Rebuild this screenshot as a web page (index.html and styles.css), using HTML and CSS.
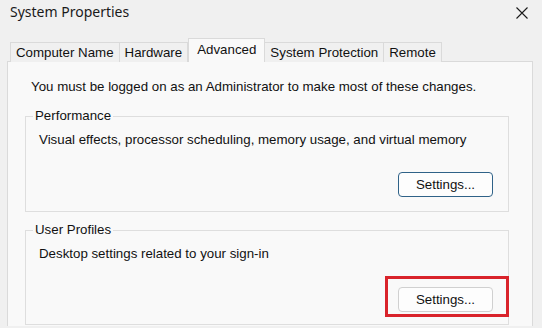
FILE: index.html
```html
<!DOCTYPE html>
<html lang="en">
<head>
<meta charset="utf-8">
<title>System Properties</title>
<link rel="stylesheet" href="styles.css">
</head>
<body>
<div class="window">
  <div class="titlebar">
    <span class="title">System Properties</span>
    <span class="close" aria-label="Close">
      <svg width="12" height="12" viewBox="0 0 12 12"><path d="M0.5 0.5 L11.5 11.5 M11.5 0.5 L0.5 11.5" stroke="#1a1a1a" stroke-width="1.1" fill="none"/></svg>
    </span>
  </div>
  <div class="tabs">
    <div class="tab">Computer Name</div>
    <div class="tab">Hardware</div>
    <div class="tab active">Advanced</div>
    <div class="tab">System Protection</div>
    <div class="tab">Remote</div>
  </div>
  <div class="panel">
    <p class="note">You must be logged on as an Administrator to make most of these changes.</p>
    <fieldset class="group">
      <legend>Performance</legend>
      <p class="desc">Visual effects, processor scheduling, memory usage, and virtual memory</p>
      <div class="actions">
        <button class="btn default">Settings...</button>
      </div>
    </fieldset>
    <fieldset class="group second">
      <legend>User Profiles</legend>
      <p class="desc">Desktop settings related to your sign-in</p>
      <div class="actions">
        <span class="highlight-wrap">
          <button class="btn">Settings...</button>
          <span class="highlight"></span>
        </span>
      </div>
    </fieldset>
  </div>
</div>
</body>
</html>
```

FILE: styles.css
```css
html, body {
  margin: 0;
  padding: 0;
  width: 542px;
  height: 328px;
  overflow: hidden;
  background: #f0f0f0;
}

.window {
  font-family: "Liberation Sans", Arial, sans-serif;
  font-size: 13.3px;
  color: #111;
  display: flex;
  flex-direction: column;
}

.titlebar {
  height: 39px;
  display: flex;
  align-items: flex-start;
  justify-content: space-between;
  padding: 0 14px 0 10px;
  box-sizing: border-box;
}

.title {
  font-family: "Noto Sans", "Liberation Sans", sans-serif;
  font-size: 14px;
  line-height: 18px;
  margin-top: 3px;
  color: #1a1a1a;
}

.close {
  display: flex;
  margin-top: 7px;
}

.tabs {
  display: flex;
  align-items: flex-end;
  padding-left: 11px;
  height: 23px;
  position: relative;
  z-index: 1;
  margin-bottom: -1px;
}

.tab {
  height: 20px;
  line-height: 19px;
  padding: 0 5px;
  border: 1px solid #dadada;
  border-bottom: none;
  background: #f0f0f0;
  box-sizing: border-box;
  margin-left: -1px;
  white-space: nowrap;
}

.tab.active {
  height: 24px;
  line-height: 21px;
  padding: 0 8px;
  background: #f9f9f9;
  margin-left: 0;
  border-color: #dadada;
}

.panel {
  margin: 0 9px 0 7px;
  background: #f9f9f9;
  border: 1px solid #dadada;
  border-bottom: none;
  padding: 17px 23px 1px 17px;
}

.note {
  margin: 0 0 13px 6px;
  line-height: 16px;
}

.group {
  margin: 0 0 10px 0;
  padding: 8px 15px 14px 13px;
  border: 1px solid #dedede;
  min-width: 0;
}

.group.second {
  margin-bottom: 0;
  padding-bottom: 12px;
}

.group legend {
  margin-left: -6px;
  padding: 0 2px;
  line-height: 16px;
}

.desc {
  margin: 0 0 24px 0;
  line-height: 16px;
}

.group.second .desc {
  margin-bottom: 25px;
}

.actions {
  display: flex;
  justify-content: flex-end;
}

.btn {
  font-family: "Liberation Sans", Arial, sans-serif;
  font-size: 13.3px;
  color: #111;
  width: 95px;
  height: 25px;
  padding: 0;
  border: 1px solid #d0d0d0;
  border-radius: 4px;
  background: #fdfdfd;
  box-sizing: border-box;
}

.btn.default {
  border-color: #2f6288;
}

.highlight-wrap {
  position: relative;
  display: inline-flex;
}

.highlight {
  position: absolute;
  left: -13px;
  top: -11px;
  right: -16px;
  bottom: -5px;
  border: 3px solid #d9232b;
  pointer-events: none;
}
```
